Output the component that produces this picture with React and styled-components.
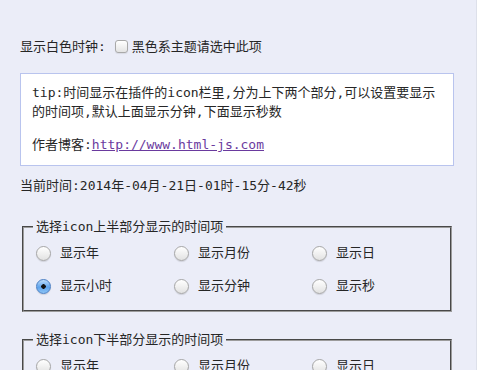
import React from 'react';
import styled, { createGlobalStyle } from 'styled-components';

const GlobalStyle = createGlobalStyle`
    html, body {
        margin: 0;
        padding: 0;
        background: #ebedf8;
    }
`

const Page = styled.div`
    box-sizing: border-box;
    min-height: 370px;
    padding: 37px 0 0 20px;
    font-family: "DejaVu Sans Mono", "Noto Sans CJK SC", monospace;
    font-size: 13px;
    line-height: 19px;
    color: #262626;
    border-right: 1px solid #dde0ea;
`

const OptionRow = styled.div`
    display: flex;
    align-items: center;
    height: 19px;
`

const Check = styled.input.attrs({ type: 'checkbox' })`
    appearance: none;
    box-sizing: border-box;
    width: 13px;
    height: 13px;
    margin: 0 4px 0 9px;
    border: 1px solid #a9a9a9;
    border-radius: 3px;
    background: linear-gradient(#ffffff, #e4e4e4);
    box-shadow: inset 0 1px 0 #fff, 0 1px 1px rgba(0, 0, 0, 0.08);
`

const InfoBox = styled.div`
    box-sizing: border-box;
    width: 434px;
    margin-top: 17px;
    padding: 9px 11px 11px 11px;
    background: #fff;
    border: 1px solid #b9c4ee;
`

const Para = styled.p`
    margin: ${props => props.last ? '14px 0 0' : '0'};
`

const Link = styled.a`
    color: #6a3a9e;
    text-decoration: underline;
`

const Now = styled.div`
    margin-top: 10px;
`

const Group = styled.fieldset`
    box-sizing: border-box;
    width: 430px;
    margin: ${props => props.first ? '22px' : '18px'} 0 0 2px;
    padding: 0 12px 8px 12px;
    border: 2px groove #9c9c9c;
    min-width: 0;
`

const Legend = styled.legend`
    padding: 0 3px;
    margin-left: -3px;
    line-height: 19px;
`

const Grid = styled.div`
    display: grid;
    grid-template-columns: repeat(3, 138px);
    grid-auto-rows: 33px;
`

const Choice = styled.label`
    display: flex;
    align-items: center;
`

const Radio = styled.input.attrs({ type: 'radio' })`
    appearance: none;
    box-sizing: border-box;
    width: 15px;
    height: 15px;
    margin: 2px 9px 0 0;
    border-radius: 50%;
    border: 1px solid #a6a6a6;
    background: linear-gradient(#ffffff, #e2e2e2);
    box-shadow: 0 1px 1px rgba(0, 0, 0, 0.12);

    &:checked {
        border-color: #4a7fc4;
        background: radial-gradient(circle at 50% 50%, #111 0 2px, transparent 2.5px),
            linear-gradient(#bcdcfa, #5ea3ec 55%, #8cc3f5);
    }
`

const items = ['显示年', '显示月份', '显示日', '显示小时', '显示分钟', '显示秒'];

const TimeGroup = ({ title, name, checked, first }) => (
    <Group first={first}>
        <Legend>{title}</Legend>
        <Grid>
            {items.map((item, i) => (
                <Choice key={item}>
                    <Radio name={name} defaultChecked={i === checked} />
                    {item}
                </Choice>
            ))}
        </Grid>
    </Group>
)

const App = () => {
    return (
        <>
            <GlobalStyle />
            <Page>
                <OptionRow>
                    显示白色时钟:<Check />黑色系主题请选中此项
                </OptionRow>
                <InfoBox>
                    <Para>
                        tip:时间显示在插件的icon栏里,分为上下两个部分,可以设置要显示<br />
                        的时间项,默认上面显示分钟,下面显示秒数
                    </Para>
                    <Para last>
                        作者博客:<Link href="#">http://www.html-js.com</Link>
                    </Para>
                </InfoBox>
                <Now>当前时间:2014年-04月-21日-01时-15分-42秒</Now>
                <TimeGroup first title="选择icon上半部分显示的时间项" name="up" checked={3} />
                <TimeGroup title="选择icon下半部分显示的时间项" name="down" checked={-1} />
            </Page>
        </>
    );
}

export default App;
